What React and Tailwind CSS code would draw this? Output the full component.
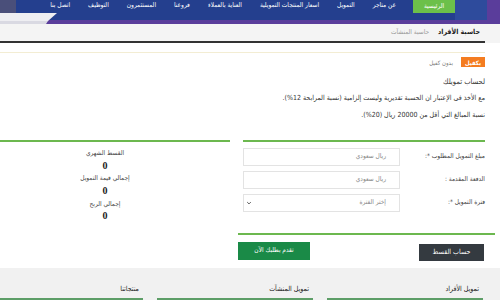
import React from "react";

const navItems = [
  "عن متاجر",
  "التمويل",
  "اسعار المنتجات التمويلية",
  "العناية بالعملاء",
  "فروعنا",
  "المستثمرون",
  "التوظيف",
  "اتصل بنا",
];

function Header() {
  return (
    <header className="relative h-[24px] bg-[#5a3d9b]">
      <div className="flex h-[20px] bg-[#243f8e]">
        <div className="w-[13px] bg-[#5a3d9b]" />
        <div className="w-[32px] bg-[#2e4b9c]" />
        <div className="flex h-[13px] w-[42px] items-center justify-center bg-[#6cc04a] text-[6.5px] text-white">
          الرئيسية
        </div>
        <nav className="flex h-[12px] items-center gap-[18px] pr-[17px] text-[6.5px] text-white">
          {navItems.map((item) => (
            <span key={item} className="whitespace-nowrap">
              {item}
            </span>
          ))}
        </nav>
      </div>
      {/* left corner decoration */}
      <svg className="absolute left-0 top-0" width="60" height="24" viewBox="0 0 60 24">
        <rect x="0" y="0" width="16" height="13" fill="#4a4f7a" />
        <polygon points="0,13 57,13 48,21 0,21" fill="#eeeef2" />
        <polygon points="0,21 48,21 46,24 0,24" fill="#d9d9e2" />
      </svg>
    </header>
  );
}

function Field({ label, placeholder, select }) {
  return (
    <div className="flex h-[18px] items-center">
      <div className="w-[85px] shrink-0 text-[6.5px] text-[#444]">{label}</div>
      <div className="flex h-[18px] w-[157px] items-center justify-between border border-[#e3e3e3] bg-white pr-[13px] pl-[2px] text-[6.5px] text-[#888]">
        <span>{placeholder}</span>
        {select && (
          <svg width="6" height="6" viewBox="0 0 10 10">
            <path d="M2 3.5 L5 6.5 L8 3.5" fill="none" stroke="#555" strokeWidth="1.6" />
          </svg>
        )}
      </div>
    </div>
  );
}

function Result({ title }) {
  return (
    <>
      <div className="h-[12.7px] text-[6.5px] leading-[12.7px] text-[#444]">{title}</div>
      <div className="h-[12.7px] font-['Liberation_Serif'] text-[10px] font-bold leading-[12.7px] text-[#1a1a1a]">
        0
      </div>
    </>
  );
}

export default function App() {
  return (
    <div
      dir="rtl"
      className="relative h-[300px] w-[500px] overflow-hidden bg-white font-['DejaVu_Sans_Condensed','DejaVu_Sans',sans-serif]"
    >
      <Header />

      <div className="h-[19px] bg-[#f4f4f4] pr-[15px]">
        <div className="flex h-[19px] items-center gap-[9px] border-b-2 border-[#333] pr-[5px]">
          <span className="text-[7px] font-bold text-[#222]">حاسبة الأفراد</span>
          <span className="text-[6.5px] text-[#999]">حاسبة المنشآت</span>
        </div>
      </div>

      <main className="pr-[15px]">
        <div className="mt-[9px] h-px bg-[#f3edd3]" />
        <div className="mt-[4px] flex h-[10px] items-center gap-[8px]">
          <span className="flex h-[10px] items-center bg-[#f47c20] px-[4px] text-[6px] font-bold text-white">
            بكفيل
          </span>
          <span className="text-[6px] text-[#777]">بدون كفيل</span>
        </div>

        <div className="mt-[6px] text-[7px] leading-[17px] text-[#333]">
          <p className="text-[7.5px]">لحساب تمويلك</p>
          <p className="whitespace-nowrap">
            مع الأخذ فى الإعتبار ان الحسبة تقديرية وليست إلزامية (نسبة المرابحة 12%).
          </p>
          <p>نسبة المبالغ التي أقل من 20000 ريال (20%).</p>
        </div>

        <div className="mt-[16px] flex gap-[13px]">
          <section className="w-[242px] shrink-0">
            <div className="h-[2px] bg-[#6cb84f]" />
            <div className="mt-[6px] flex flex-col gap-[5px]">
              <Field label="مبلغ التمويل المطلوب *:" placeholder="ريال سعودي" />
              <Field label="الدفعة المقدمة :" placeholder="ريال سعودي" />
              <Field label="فترة التمويل *:" placeholder="إختر الفترة" select />
            </div>
          </section>
          <section className="w-[230px] shrink-0">
            <div className="h-[2px] bg-[#6cb84f]" />
            <div className="mt-[5px] flex flex-col items-center pr-[20px]">
              <Result title="القسط الشهري" />
              <Result title="إجمالي قيمة التمويل" />
              <Result title="إجمالي الربح" />
            </div>
          </section>
        </div>

        <div className="-mr-[10px] mt-[10px] w-[257px]">
          <div className="h-[2px] bg-[#6cb84f]" />
          <div className="flex items-start justify-between">
            <button className="mr-[11px] mt-[9px] h-[17px] w-[65px] bg-[#343a40] text-[7px] text-white">
              حساب القسط
            </button>
            <button className="mt-[7px] h-[18px] w-[72px] bg-[#1a8a47] text-[6.5px] text-white">
              تقدم بطلبك الآن
            </button>
          </div>
        </div>
      </main>

      <footer className="absolute bottom-0 left-0 right-0 h-[32px] bg-[#f1f1f1] pr-[17px]">
        <div className="flex h-[32px] gap-[14px]">
          {["تمويل الأفراد", "تمويل المنشآت", "منتجاتنا"].map((t) => (
            <div
              key={t}
              className="flex w-[156px] shrink-0 items-end border-b-2 border-[#5d9e67] pr-[4px] pb-[4px] text-[7px] text-[#222]"
            >
              {t}
            </div>
          ))}
        </div>
      </footer>
    </div>
  );
}
